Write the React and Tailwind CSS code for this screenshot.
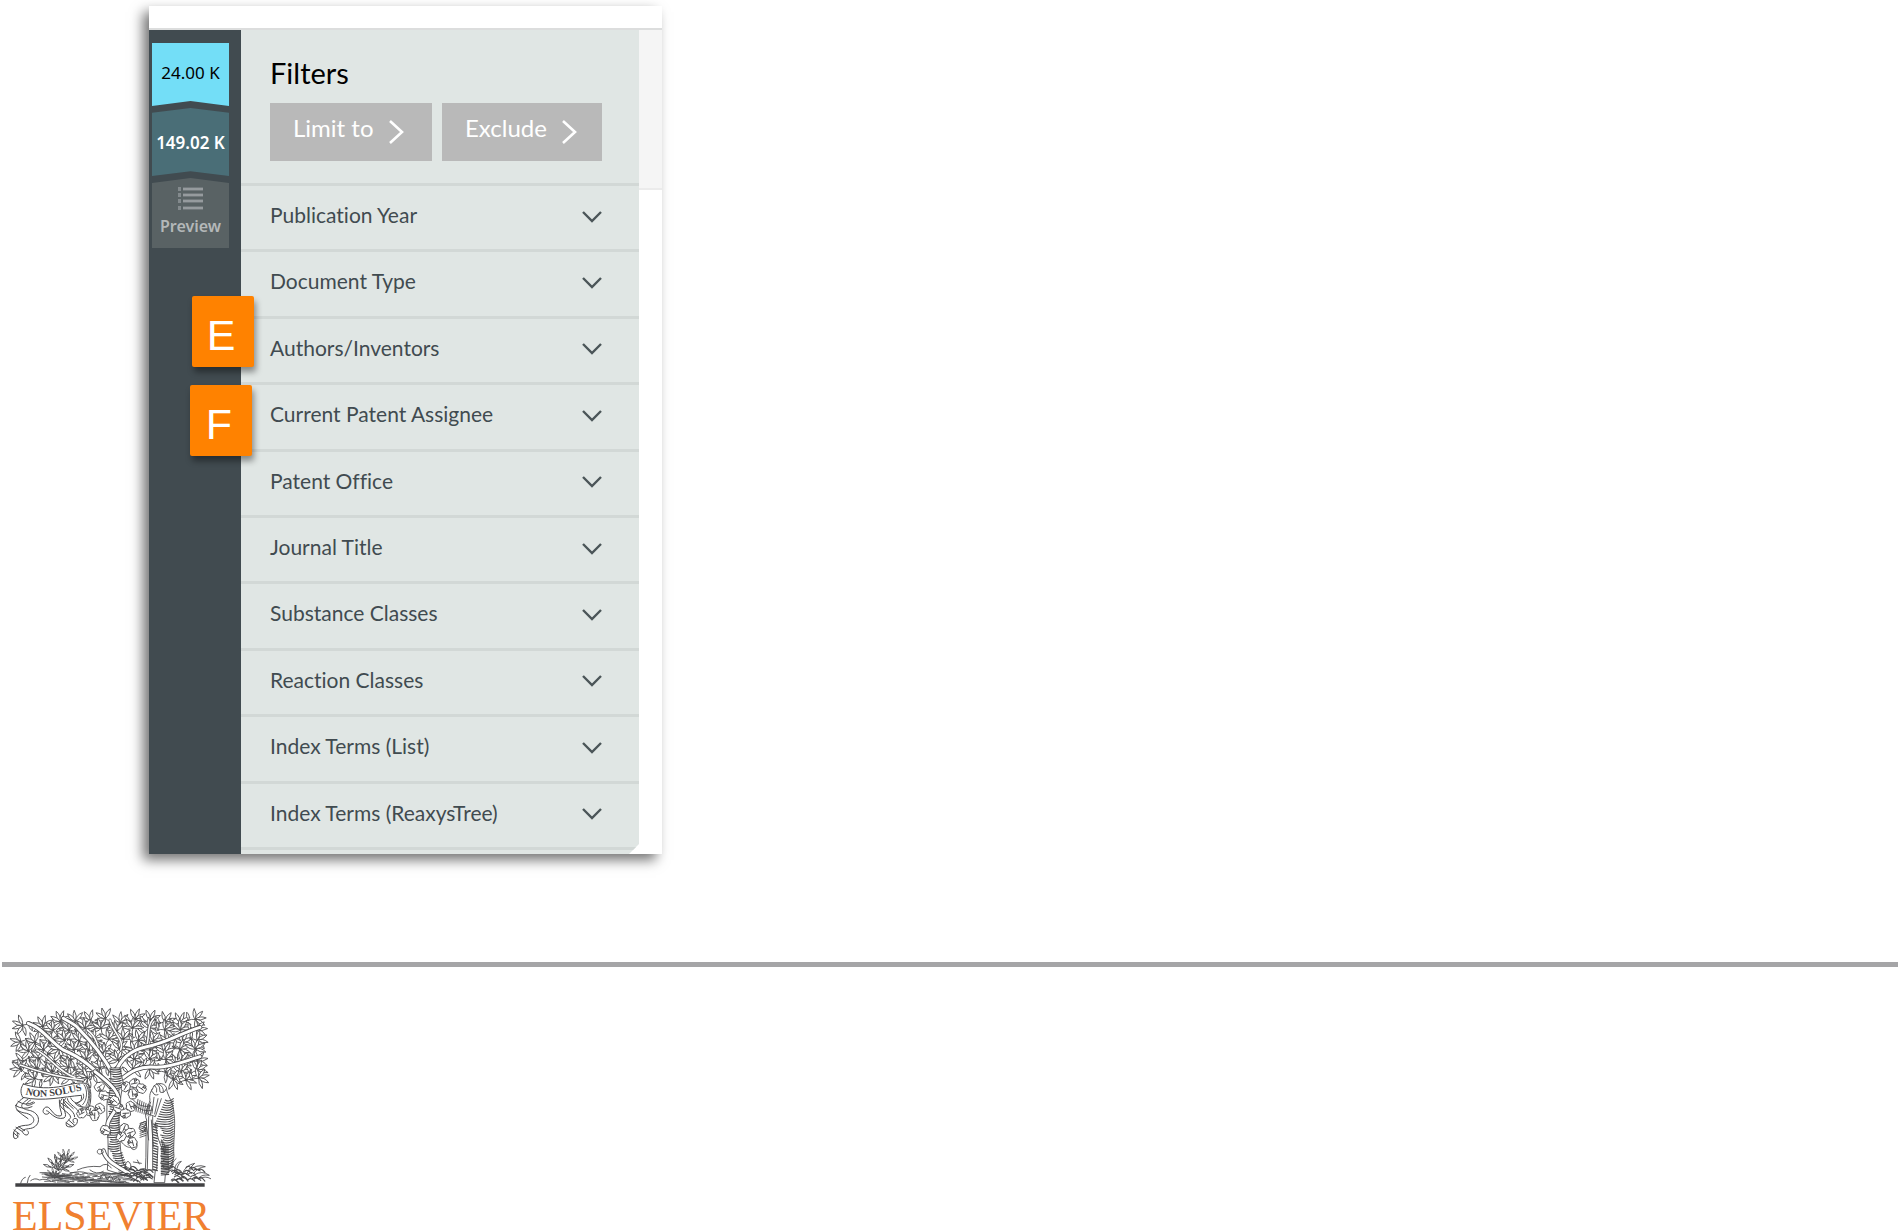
import { useState } from 'react'

const FILTERS = [
  'Publication Year',
  'Document Type',
  'Authors/Inventors',
  'Current Patent Assignee',
  'Patent Office',
  'Journal Title',
  'Substance Classes',
  'Reaction Classes',
  'Index Terms (List)',
  'Index Terms (ReaxysTree)',
]

// repeatable noise, so the engraving is the same on every render
const noise = (n) => {
  const v = Math.sin(n * 127.1 + 11.7) * 43758.5453
  return v - Math.floor(v)
}

// rows of twigs: y, first x, last x
const TWIG_ROWS = [
  [241, 182, 586],
  [258, 68, 130],
  [270, 160, 590],
  [302, 62, 592],
  [332, 86, 586],
  [360, 70, 592],
  [388, 62, 300],
  [392, 400, 592],
  [412, 104, 262],
  [416, 520, 596],
]

const TWIGS = TWIG_ROWS.flatMap(([y, from, to], row) => {
  const count = Math.max(1, Math.round((to - from) / 46))
  return Array.from({ length: count + 1 }, (_, i) => {
    const seed = row * 31 + i
    const x = from + ((to - from) * i) / count
    const out = (Math.atan2(y - 420, x - 335) * 180) / Math.PI
    return { x, y: y + noise(seed) * 14 - 7, angle: out + noise(seed + 500) * 110 - 55 }
  })
})

const LIMBS = [
  'M330 440C290 390 240 350 190 330C150 305 130 265 85 250',
  'M338 400C310 350 270 300 235 265C222 250 205 245 190 235',
  'M345 400C360 360 390 330 440 320C500 310 540 280 600 262',
  'M355 425C390 395 420 375 470 382C520 380 550 365 600 350',
]

const SHOOTS = [
  'M225 412C180 400 150 350 110 330',
  'M362 330C375 300 340 280 330 240',
  'M250 420C190 415 130 400 60 375',
  'M440 320C450 280 440 260 460 236',
  'M300 360C296 320 290 290 262 270',
]

const GRAPES = [
  [298, 440], [312, 466], [300, 505], [270, 512], [246, 520], [356, 505], [392, 500], [372, 566],
  [390, 578], [316, 570], [398, 608], [378, 440], [404, 430], [424, 446], [398, 462], [432, 560],
  [376, 520], [344, 482], [284, 526], [364, 590],
]

function Twig({ x, y, angle }) {
  return (
    <g transform={`translate(${x} ${y}) rotate(${angle})`}>
      <path d="M-24 3Q-12 -2 0 0" />
      {[-96, -48, -8, 32, 78].map((turn) => (
        <path key={turn} d="M0 0Q14 -11 33 0Q16 8 0 0" transform={`rotate(${turn})`} />
      ))}
      <path d="M-20 3Q-30 -8 -26 -22Q-14 -12 -20 3" />
    </g>
  )
}

function Bush({ x, y, size }) {
  return (
    <g transform={`translate(${x} ${y}) scale(${size})`}>
      {[-70, -42, -14, 14, 42, 70].map((turn) => (
        <path key={turn} d="M0 0Q4 -20 0 -34M0 -28Q8 -40 0 -54Q-8 -40 0 -28M1 -12Q12 -18 16 -32Q3 -26 1 -12" transform={`rotate(${turn})`} />
      ))}
    </g>
  )
}

function TreeEmblem() {
  return (
    <svg viewBox="24 198 624 546" className="block h-[182px] w-[208px]" fill="none" stroke="#4a4a4c" strokeWidth="2.6" strokeLinecap="round" aria-hidden="true">
      <g fill="#fff" strokeWidth="2.5">
        {TWIGS.map((t, i) => <Twig key={i} {...t} />)}
      </g>

      {/* limbs: dark outline, then a white core */}
      <g strokeWidth="9">{SHOOTS.map((d) => <path key={d} d={d} />)}</g>
      <g stroke="#fff" strokeWidth="5">{SHOOTS.map((d) => <path key={d} d={d} />)}</g>
      <g strokeWidth="14">{LIMBS.map((d) => <path key={d} d={d} />)}</g>
      <g stroke="#fff" strokeWidth="9">{LIMBS.map((d) => <path key={d} d={d} />)}</g>

      {/* trunk */}
      <path fill="#fff" d="M330 385C336 430 332 450 322 480C316 540 330 600 322 690L400 715C366 680 362 650 360 600C352 540 360 470 370 430C366 410 362 400 360 385Z" />
      {Array.from({ length: 46 }, (_, i) => {
        const y = 388 + i * 7
        const right = y < 450 ? 364 : y < 640 ? 358 : 366 + (y - 640) / 3
        return <path key={y} strokeWidth="3.4" d={`M${right - 24 - noise(i) * 12} ${y}Q${right - 10} ${y + 4} ${right} ${y - 2}`} />
      })}
      <path strokeWidth="14" d="M285 395C330 430 372 465 352 500C330 540 316 540 326 580M310 632C320 670 360 680 405 712" />
      <path stroke="#fff" strokeWidth="9" d="M285 395C330 430 372 465 352 500C330 540 316 540 326 580M310 632C320 670 360 680 405 712" />
      <path d="M306 640C296 648 286 636 296 628C310 626 314 640 306 640M360 600C380 630 400 626 410 610C416 630 396 636 392 620" />

      {/* vine leaves and grapes */}
      {GRAPES.map(([x, y], i) => (
        <g key={i} transform={`translate(${x} ${y}) rotate(${i * 47})`}>
          <path fill="#fff" d="M0 -13Q8 -18 12 -9Q20 -4 13 4Q12 14 2 12Q-8 18 -12 8Q-20 0 -11 -6Q-9 -15 0 -13Z" />
          <path d="M-6 4Q0 0 8 -6M0 0L3 8M-2 10A4 4 0 1 0 6 12A4 4 0 1 0 -2 10" />
        </g>
      ))}

      {/* banner */}
      <path fill="#fff" strokeWidth="3" d="M70 432C110 446 150 446 190 438C220 430 250 426 262 432C276 446 274 480 268 500C252 504 232 500 226 490C244 486 246 478 244 466C190 470 130 486 68 472C60 456 62 444 70 432Z" />
      <path d="M252 434C264 450 262 480 248 494M258 434C270 454 268 480 258 498M264 440C272 456 270 478 264 498M232 488C248 484 254 474 250 462" />
      <path id="motto" stroke="none" d="M76 462C120 478 170 468 252 450" />
      <text fill="#3c3c3e" stroke="none" fontSize="30" fontWeight="700" fontFamily="Liberation Serif, serif">
        <textPath href="#motto">NON SOLUS</textPath>
      </text>
      <g strokeWidth="3">
        <path d="M70 474C30 500 50 516 80 520C112 530 106 556 76 556C44 558 36 578 42 594C50 600 58 590 52 580" />
        <path d="M84 478C48 500 70 508 92 512C128 524 120 564 86 566C70 568 64 572 70 580C80 592 92 580 82 572" />
        <path d="M92 480C66 498 82 502 104 488M54 484Q78 500 100 486M46 496Q70 512 96 500M50 510Q66 524 84 536M42 570L58 582M48 562L66 574M40 578L54 590M56 560L74 572" />
        <path d="M186 476C166 500 196 526 180 528C156 530 152 494 136 502C120 514 136 530 146 520" />
        <path d="M196 476C176 496 208 524 192 534C164 542 148 512 140 512" />
        <path d="M178 480C174 510 210 514 212 532C206 544 194 546 200 558C214 566 236 556 232 538C222 530 214 540 222 548" />
        <path d="M190 478C190 500 224 510 224 530M202 476C204 494 236 504 238 520M212 474C220 492 240 490 248 502M198 548L216 560M206 540L224 556M184 490L204 504M196 484L220 506" />
      </g>

      {/* scholar */}
      <path fill="#fff" d="M462 438C474 424 500 430 500 448C502 466 520 486 522 520C528 560 518 610 522 650C514 674 506 700 496 704L494 728H462L466 690L436 690C440 640 436 590 440 540C430 520 446 500 450 480C446 460 456 450 462 438Z" />
      <path d="M458 446Q450 454 460 458Q462 468 474 464M470 430Q482 440 480 456Q492 462 498 448M476 432Q492 440 490 456M464 436Q474 446 470 456" />
      <path d="M396 476Q420 506 452 498M400 492Q430 520 458 510M452 486L440 520L466 530L484 476M462 472L456 520M474 476L464 522M446 530L442 686M458 530V690M438 548L446 600M466 548Q470 600 494 640M486 600Q500 620 494 640L484 600M474 620L470 690M454 540L460 620" />
      {Array.from({ length: 30 }, (_, i) => (
        <path key={i} strokeWidth="3.2" d={`M${i < 12 ? 496 - i * 3 : 482 + (i % 3) * 4} ${480 + i * 7}Q${506} ${488 + i * 7} ${520} ${476 + i * 7}`} />
      ))}
      {Array.from({ length: 18 }, (_, i) => (
        <path key={i} strokeWidth="3.6" d={`M460 ${552 + i * 8}L472 ${556 + i * 8}M484 ${620 + i * 5}L506 ${618 + i * 5}`} />
      ))}
      {Array.from({ length: 8 }, (_, i) => (
        <path key={i} d={`M${414 + i * 6} ${478 + i * 3}L${408 + i * 6} ${514 + i * 2}M420 ${550 + i * 6}L438 ${544 + i * 6}`} />
      ))}

      {/* ground */}
      <Bush x={176} y={690} size={0.9} />
      <Bush x={198} y={664} size={0.7} />
      <Bush x={164} y={714} size={0.6} />
      <path d="M62 730Q66 714 76 712M82 728Q84 712 90 706M92 722Q104 712 118 720Q140 714 152 724M232 690Q262 676 300 680Q320 664 334 684M210 700Q240 690 262 700M270 690Q290 706 310 694M300 716Q310 686 322 720Q332 694 340 722Q354 700 360 724" />
      {Array.from({ length: 64 }, (_, i) => {
        const x = 120 + (i * 53) % 250
        const y = 698 + (i * 7) % 30
        return <path key={i} d={`M${x} ${y}q${10 + noise(i) * 12} ${noise(i + 9) * 8 - 4} ${24 + noise(i) * 16} 2`} />
      })}
      {Array.from({ length: 56 }, (_, i) => {
        const x = i % 2 ? 500 + noise(i) * 96 : 366 + noise(i) * 74
        const y = 682 + noise(i + 70) * 42
        return <path key={i} strokeWidth="3.4" d={`M${x} ${y}q8 -9 20 ${noise(i + 30) * 8}`} />
      })}
      <path d="M524 690Q524 668 544 664Q530 676 530 694M548 700Q556 676 584 670Q566 684 560 702M566 694Q590 670 616 680Q592 682 580 702M584 704Q606 690 628 706Q606 702 596 714M598 716Q616 706 632 716M516 684Q516 664 528 656M380 690Q370 670 384 664Q396 670 392 690M400 666L424 670M412 660L418 672" />
      <path stroke="#414143" strokeWidth="10" strokeLinecap="butt" d="M46 735H614" />
    </svg>
  )
}

function Badge({ children, className }) {
  return (
    <span className={`absolute flex h-[71px] w-[62px] items-center justify-center rounded-[2px] bg-[#ff8200] pt-2 pr-1 font-['Liberation_Sans',sans-serif] text-[43px] leading-none text-white shadow-[2px_5px_6px_rgba(0,0,0,0.4)] ${className}`}>
      {children}
    </span>
  )
}

function ActionButton({ children }) {
  return (
    <button className="flex h-[58px] items-start gap-3.5 bg-[#b9b9b9] pt-3 pl-[23px] text-2xl leading-[26px] text-white">
      {children}
      <svg viewBox="0 0 16 26" className="mt-1 h-[26px] w-4" fill="none" stroke="currentColor" strokeWidth="2.6" aria-hidden="true">
        <path d="M2 2L14 13L2 24" />
      </svg>
    </button>
  )
}

function FilterRow({ label, open, onToggle }) {
  return (
    <li className="flex border-t-[3px] border-[#d2d8d6]">
      <button onClick={onToggle} aria-expanded={open} className="flex flex-1 items-center justify-between pr-[37px] pb-1.5 pl-[29px] text-left text-[21px] text-[#414b50]">
        {label}
        <svg viewBox="0 0 20 12" className="mt-1 h-3 w-5" fill="none" stroke="#4b5558" strokeWidth="2.4" aria-hidden="true">
          <path d="M1 1L10 10L19 1" />
        </svg>
      </button>
    </li>
  )
}

export default function App() {
  const [openFilter, setOpenFilter] = useState(null)

  return (
    <div className="flow-root bg-white font-[Lato,sans-serif] [font-variant-ligatures:none]">
      <main className="relative mt-[6px] ml-[149px] w-[513px] bg-white shadow-[-6px_6px_12px_rgba(0,0,0,0.55)]">
        <div className="h-6 border-b-2 border-[#dcdddd]" />
        <div className="flex">
          {/* Result tabs */}
          <nav className="flex w-[92px] flex-col gap-0.5 bg-[#414b50] pt-[13px] pr-3 pl-[3px] font-['Noto_Sans',sans-serif] text-[17px]">
            <button className="h-[63px] bg-[#73def7] pb-1 text-black [clip-path:polygon(0_0,100%_0,100%_100%,50%_92%,0_100%)]">24.00 K</button>
            <button className="flex h-[68px] items-center justify-center bg-[#4a6e77] pt-0.5 font-semibold whitespace-nowrap text-white [clip-path:polygon(0_7%,50%_0,100%_7%,100%_100%,50%_93%,0_100%)]">149.02 K</button>
            <button className="flex h-[70px] flex-col items-center gap-1 bg-[#596264] pt-[9px] text-base font-semibold text-[#b4b8b9] [clip-path:polygon(0_7%,50%_0,100%_7%,100%_100%,0_100%)]">
              <svg viewBox="0 0 25 23" className="h-[23px] w-[25px]" fill="#969b9e" aria-hidden="true">
                {[1, 7, 13, 20].map((y) => (
                  <g key={y}>
                    <rect y={y - 1} width="3" height="4" opacity="0.7" />
                    <rect x="5" y={y - 1} width="20" height="4" opacity="0.4" />
                    <rect x="5" y={y} width="20" height="2" />
                  </g>
                ))}
              </svg>
              Preview
            </button>
          </nav>

          {/* Filters */}
          <section className="flex-1 bg-[#e0e6e4] [clip-path:polygon(0_0,100%_0,100%_814px,388px_100%,0_100%)]">
            <div className="h-[153px] pt-[26px] pr-[37px] pl-[29px]">
              <h1 className="text-[29px] leading-[34px] text-black">Filters</h1>
              <div className="mt-[13px] grid grid-cols-[81fr_80fr] gap-[10px]">
                <ActionButton>Limit to</ActionButton>
                <ActionButton>Exclude</ActionButton>
              </div>
            </div>
            <ul className="grid h-[664px] auto-rows-fr">
              {FILTERS.map((label) => (
                <FilterRow
                  key={label}
                  label={label}
                  open={openFilter === label}
                  onToggle={() => setOpenFilter(openFilter === label ? null : label)}
                />
              ))}
            </ul>
            <div className="h-[7px] border-t-[3px] border-[#d2d8d6]" />
          </section>

          <div className="w-[23px]">
            <div className="h-40 border-b-2 border-[#ebebeb] bg-[#f5f5f5]" />
          </div>
        </div>

        <Badge className="top-[290px] left-[43px]">E</Badge>
        <Badge className="top-[379px] left-[41px]">F</Badge>
      </main>

      <footer className="mt-[108px] ml-0.5 border-t-[5px] border-[#a5a5a7] pt-[39px] pl-[6px]">
        <TreeEmblem />
        <p className="mt-3 pl-1 font-['Liberation_Serif',serif] text-[42px] leading-8 text-[#f08030]">ELSEVIER</p>
      </footer>
    </div>
  )
}
